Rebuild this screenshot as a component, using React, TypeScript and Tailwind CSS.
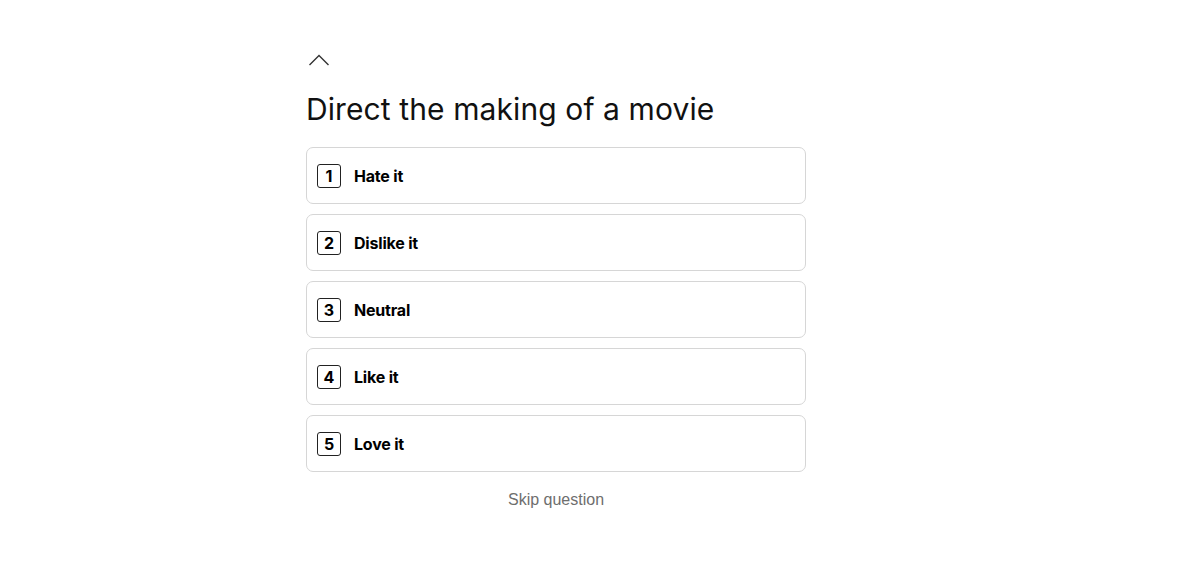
const options = ["Hate it", "Dislike it", "Neutral", "Like it", "Love it"];

const App = () => {
  return (
    <div className="min-h-screen bg-white font-['Inter',sans-serif] text-black">
      <div className="ml-[306px] w-[500px] pt-[53px]">
        {/* back */}
        <button className="block ml-[2px] text-[#333]">
          <svg width="22" height="14" viewBox="0 0 22 14" fill="none">
            <path d="M1.5 12L11 2.5L20.5 12" stroke="currentColor" strokeWidth="1.4" />
          </svg>
        </button>

        <h1 className="mt-[22px] text-[30px] leading-[40px] font-normal tracking-[0.1px] text-[#111]">
          Direct the making of a movie
        </h1>

        <div className="mt-[18px] flex flex-col gap-[10px]">
          {options.map((label, i) => (
            <button
              key={label}
              className="flex h-[57px] w-full items-center rounded-[7px] border border-[#d6d6d6] px-[10px] text-left"
            >
              <span className="flex h-[24px] w-[24px] items-center justify-center rounded-[3px] border border-[#222] text-[16px] font-bold leading-none">
                {i + 1}
              </span>
              <span className="ml-[13px] text-[16px] font-bold tracking-[-0.2px]">{label}</span>
            </button>
          ))}
        </div>

        <div className="mt-[16px] text-center font-['Liberation_Sans',sans-serif] text-[16px] text-[#6e6e6e]">
          Skip question
        </div>
      </div>
    </div>
  );
};

export default App;
